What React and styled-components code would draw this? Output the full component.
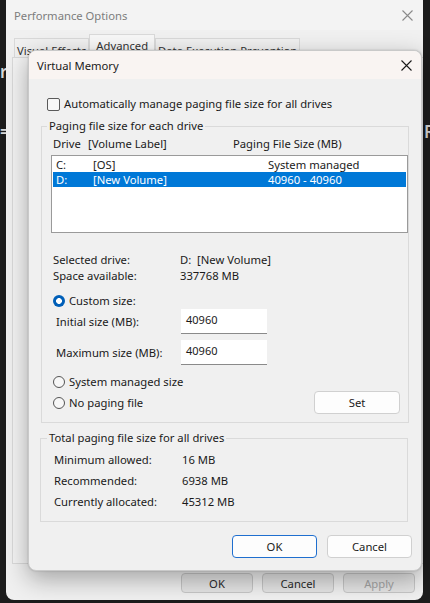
import styled, { createGlobalStyle } from "styled-components";

const GlobalStyle = createGlobalStyle`
  html, body {
    margin: 0;
    padding: 0;
    background: #1c1c1c;
  }
  body {
    font-family: "Noto Sans", "Liberation Sans", sans-serif;
    font-size: 11.25px;
    color: #1a1a1a;
  }
`;

const drives = [
  { letter: "C:", label: "[OS]", size: "System managed" },
  { letter: "D:", label: "[New Volume]", size: "40960 - 40960", selected: true },
];

const totals = [
  ["Minimum allowed:", "16 MB"],
  ["Recommended:", "6938 MB"],
  ["Currently allocated:", "45312 MB"],
];

const CloseIcon = ({ color = "#1a1a1a" }) => (
  <svg width="11" height="11" viewBox="0 0 11 11">
    <path d="M0.5 0.5 L10.5 10.5 M10.5 0.5 L0.5 10.5" stroke={color} strokeWidth="1.1" fill="none" />
  </svg>
);

const App = () => {
  return (
    <>
      <GlobalStyle />
      <Screen>
        <BackGlyph $left="0px" $top="60px">r</BackGlyph>
        <BackGlyph $left="0px" $top="120px">=</BackGlyph>
        <BackGlyph $left="424px" $top="120px">R</BackGlyph>

        <OuterWindow>
          <OuterTitleBar>
            <OuterTitle>Performance Options</OuterTitle>
            <CloseIcon color="#8a8a8a" />
          </OuterTitleBar>
          <Tabs>
            <Tab>Visual Effects</Tab>
            <Tab $active>Advanced</Tab>
            <Tab>Data Execution Prevention</Tab>
          </Tabs>
          <TabPanel />
          <OuterButtons>
            <OuterButton>OK</OuterButton>
            <OuterButton>Cancel</OuterButton>
            <OuterButton $disabled>Apply</OuterButton>
          </OuterButtons>
        </OuterWindow>

        <Dialog>
          <TitleBar>
            <Title>Virtual Memory</Title>
            <CloseIcon />
          </TitleBar>
          <Body>
            <CheckRow>
              <Checkbox />
              Automatically manage paging file size for all drives
            </CheckRow>

            <Group $pad="0 0 8px 9px">
              <Legend $ml="-4px">Paging file size for each drive</Legend>
              <HeaderRow>
                <span>Drive</span>
                <span>[Volume Label]</span>
                <span>Paging File Size (MB)</span>
              </HeaderRow>
              <DriveList>
                {drives.map((d) => (
                  <DriveRow key={d.letter} $selected={d.selected}>
                    <span>{d.letter}</span>
                    <span>{d.label}</span>
                    <span>{d.size}</span>
                  </DriveRow>
                ))}
              </DriveList>

              <InfoRow $mt="19px">
                <span>Selected drive:</span>
                <span>D:&nbsp; [New Volume]</span>
              </InfoRow>
              <InfoRow>
                <span>Space available:</span>
                <span>337768 MB</span>
              </InfoRow>

              <RadioRow $mt="9px">
                <Radio $checked />
                Custom size:
              </RadioRow>
              <SizeRow>
                <span>Initial size (MB):</span>
                <SizeInput>40960</SizeInput>
              </SizeRow>
              <SizeRow $mt="6px">
                <span>Maximum size (MB):</span>
                <SizeInput>40960</SizeInput>
              </SizeRow>
              <RadioRow $mt="9px">
                <Radio />
                System managed size
              </RadioRow>
              <LastRow>
                <RadioRow>
                  <Radio />
                  No paging file
                </RadioRow>
                <Button $w="86px">Set</Button>
              </LastRow>
            </Group>

            <Group $mt="7px" $ml="-1px" $pad="3px 0 9px 13px">
              <Legend $ml="-7px">Total paging file size for all drives</Legend>
              {totals.map(([label, value]) => (
                <TotalRow key={label}>
                  <span>{label}</span>
                  <span>{value}</span>
                </TotalRow>
              ))}
            </Group>

            <DialogButtons>
              <Button $w="85px" $focused>OK</Button>
              <Button $w="85px">Cancel</Button>
            </DialogButtons>
          </Body>
        </Dialog>
      </Screen>
    </>
  );
};

const Screen = styled.div`
  position: relative;
  width: 430px;
  height: 603px;
  overflow: hidden;
  background: #1c1c1c;
`;

const BackGlyph = styled.span`
  position: absolute;
  left: ${(p) => p.$left};
  top: ${(p) => p.$top};
  font-size: 17px;
  font-weight: 600;
  color: #d8d8d8;
`;

const OuterWindow = styled.div`
  position: relative;
  margin-left: 6px;
  width: 417px;
  height: 600px;
  background: #f0f0f0;
  border-radius: 0 0 8px 8px;
  display: flex;
  flex-direction: column;
  overflow: hidden;
`;

const OuterTitleBar = styled.div`
  height: 30px;
  display: flex;
  align-items: center;
  justify-content: space-between;
  padding: 0 10px 0 8px;
  background: #f3f3f3;
`;

const OuterTitle = styled.span`
  color: #7d7d7d;
`;

const Tabs = styled.div`
  display: flex;
  align-items: flex-end;
  height: 27px;
  padding-left: 8px;
`;

const Tab = styled.div`
  height: ${(p) => (p.$active ? "22px" : "19px")};
  padding: 0 ${(p) => (p.$active ? "6px" : "2px")};
  margin-bottom: ${(p) => (p.$active ? "1px" : "0")};
  display: flex;
  align-items: ${(p) => (p.$active ? "center" : "flex-start")};
  padding-top: ${(p) => (p.$active ? "0" : "4px")};
  box-sizing: border-box;
  border: 1px solid #d9d9d9;
  border-bottom: none;
  background: ${(p) => (p.$active ? "#f7f7f7" : "#f0f0f0")};
  color: #333;
`;

const TabPanel = styled.div`
  height: 505px;
  margin-left: 6px;
  border: 1px solid #d9d9d9;
  border-right: none;
  background: #f3f3f3;
`;

const OuterButtons = styled.div`
  display: flex;
  justify-content: flex-end;
  gap: 9px;
  padding: 9px 8px 0 0;
`;

const OuterButton = styled.div`
  width: 72px;
  height: 20px;
  box-sizing: border-box;
  border: 1px solid #c6c6c6;
  border-radius: 4px;
  background: #e4e4e4;
  display: flex;
  align-items: center;
  justify-content: center;
  color: ${(p) => (p.$disabled ? "#a3a3a3" : "#2a2a2a")};
`;

const Dialog = styled.div`
  position: absolute;
  left: 28px;
  top: 50px;
  width: 394px;
  height: 521px;
  box-sizing: border-box;
  border: 1px solid #c9c9c9;
  border-radius: 8px;
  background: #f0f0f0;
  box-shadow: 0 8px 24px rgba(0, 0, 0, 0.32), 0 0 2px rgba(0, 0, 0, 0.2);
  overflow: hidden;
`;

const TitleBar = styled.div`
  height: 28px;
  display: flex;
  align-items: center;
  justify-content: space-between;
  padding: 0 9px 0 8px;
  background: #f9f4f2;
`;

const Title = styled.span`
  color: #1a1a1a;
`;

const Body = styled.div`
  padding: 17px 0 0 12px;
  display: flex;
  flex-direction: column;
`;

const CheckRow = styled.label`
  display: flex;
  align-items: center;
  gap: 4px;
  height: 16px;
  margin-left: 6px;
  line-height: 16px;
`;

const Checkbox = styled.span`
  width: 11px;
  height: 11px;
  border: 1px solid #5a5a5a;
  border-radius: 2px;
  background: #f7f7f7;
`;

const Group = styled.fieldset`
  margin: ${(p) => p.$mt || "6px"} 0 0 ${(p) => p.$ml || "0"};
  padding: ${(p) => p.$pad};
  width: 368px;
  box-sizing: border-box;
  min-inline-size: 0;
  border: 1px solid #dadada;
`;

const Legend = styled.legend`
  padding: 0 2px;
  margin-left: ${(p) => p.$ml};
  line-height: 16px;
`;

const HeaderRow = styled.div`
  margin-top: 2px;
  display: grid;
  grid-template-columns: 35px 145px 1fr;
  padding-left: 2px;
  line-height: 16px;
`;

const DriveList = styled.div`
  margin-top: 3px;
  height: 78px;
  box-sizing: border-box;
  border: 1px solid #9a9a9a;
  background: #ffffff;
  padding: 1px;
`;

const DriveRow = styled.div`
  display: grid;
  grid-template-columns: 37px 175px 1fr;
  height: 15px;
  line-height: 15px;
  padding-left: 3px;
  background: ${(p) => (p.$selected ? "#0078d7" : "transparent")};
  color: ${(p) => (p.$selected ? "#ffffff" : "#1a1a1a")};
`;

const InfoRow = styled.div`
  margin-top: ${(p) => p.$mt || "0"};
  display: grid;
  grid-template-columns: 127px 1fr;
  padding-left: 2px;
  line-height: 16px;
`;

const RadioRow = styled.label`
  margin-top: ${(p) => p.$mt || "0"};
  display: flex;
  align-items: center;
  gap: 4px;
  height: 16px;
  padding-left: 2px;
  line-height: 16px;
`;

const Radio = styled.span`
  width: ${(p) => (p.$checked ? "12px" : "10px")};
  height: ${(p) => (p.$checked ? "12px" : "10px")};
  border-radius: 50%;
  border: ${(p) => (p.$checked ? "none" : "1px solid #555")};
  background: ${(p) =>
    p.$checked
      ? "radial-gradient(circle, #ffffff 0 2.6px, #005fb8 3.2px)"
      : "#f7f7f7"};
`;

const SizeRow = styled.div`
  margin-top: ${(p) => p.$mt || "0"};
  display: grid;
  grid-template-columns: 125px 86px;
  align-items: center;
  padding-left: 5px;
  line-height: 16px;
`;

const SizeInput = styled.div`
  height: 25px;
  box-sizing: border-box;
  padding: 3px 5px 0;
  background: #ffffff;
  border-bottom: 1px solid #8a8a8a;
  font-size: 11px;
  line-height: 16px;
`;

const LastRow = styled.div`
  margin-top: 1px;
  display: flex;
  align-items: center;
  justify-content: space-between;
  padding-right: 8px;
`;

const Button = styled.div`
  width: ${(p) => p.$w};
  height: 23px;
  box-sizing: border-box;
  border: 1px solid ${(p) => (p.$focused ? "#1f6fcf" : "#d0d0d0")};
  border-radius: 4px;
  background: #fdfdfd;
  display: flex;
  align-items: center;
  justify-content: center;
  color: #1a1a1a;
`;

const TotalRow = styled.div`
  display: grid;
  grid-template-columns: 128px 1fr;
  line-height: 21px;
`;

const DialogButtons = styled.div`
  margin-top: 13px;
  display: flex;
  justify-content: flex-end;
  gap: 10px;
  padding-right: 9px;
`;

export default App;
